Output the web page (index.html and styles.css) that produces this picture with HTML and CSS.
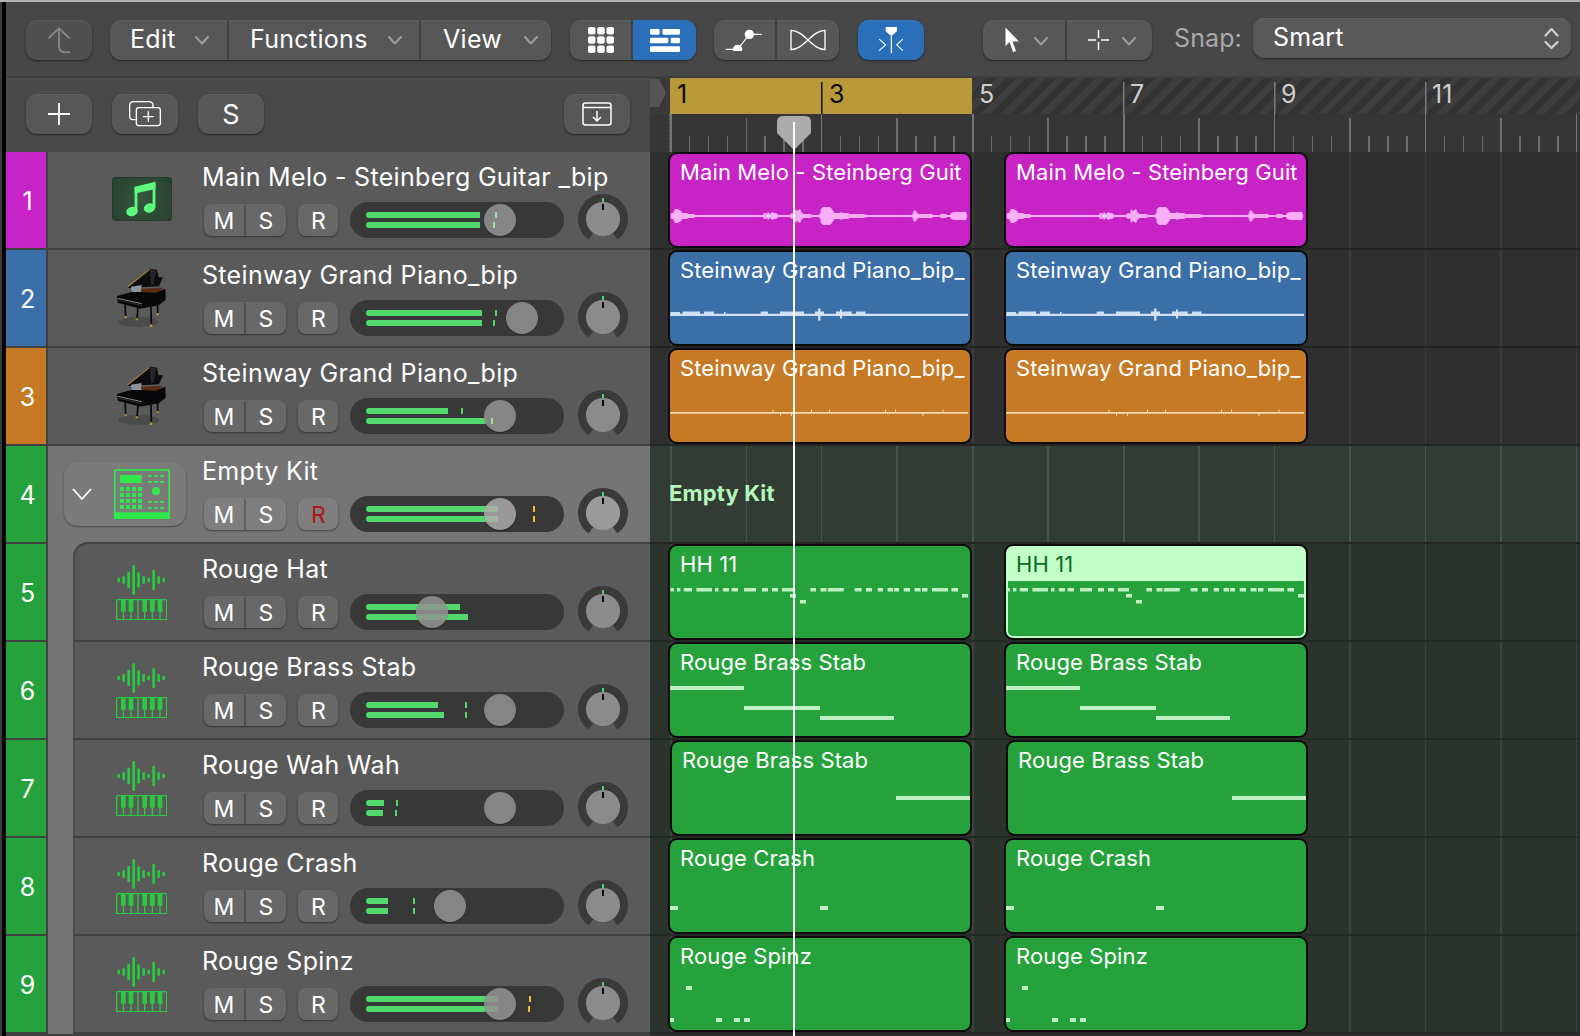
FILE: index.html
```html
<!DOCTYPE html>
<html lang="en">
<head>
<meta charset="utf-8">
<title>Logic Pro Tracks</title>
<link rel="stylesheet" href="styles.css">
</head>
<body>
<svg class="defs" aria-hidden="true">
  <defs>
    <path id="chev" d="M1 1l6 6.5L13 1" fill="none" stroke="currentColor" stroke-width="2.2" stroke-linecap="round" stroke-linejoin="round"/>
    <g id="ic-note">
      <path d="M24 34V11L42 6.500V31" fill="none" stroke="#5cfb7e" stroke-width="2.800"/>
      <path d="M22.600 10L43.400 5.500V12L22.600 16.500z" fill="#5cfb7e"/>
      <ellipse cx="20" cy="34.500" rx="5.800" ry="4.600" fill="#5cfb7e" transform="rotate(-15 20 34.500)"/>
      <ellipse cx="37.500" cy="31" rx="5.800" ry="4.600" fill="#5cfb7e" transform="rotate(-15 37.500 31)"/>
    </g>
    <g id="ic-piano">
      <ellipse cx="115" cy="452" rx="62" ry="15" fill="#000" opacity=".16"/>
      <path d="M78 350L148 292L170 295L175 318L188 318L176 345L122 348z" fill="#0c0c0e"/>
      <path d="M80 348L148 294" stroke="#b98a3c" stroke-width="3.500"/>
      <path d="M148 294L168 296L160 340L153 340z" fill="#26262a"/>
      <path d="M92 346L124 341L122 362L95 364z" fill="#8e939e"/>
      <path d="M122 352L190 349L168 366L125 364z" fill="#5b2b14"/>
      <path d="M50 374L94 362L122 362L165 364L195 352L196 385L176 402L120 412L52 394z" fill="#08080a"/>
      <path d="M52 381L124 397" stroke="#c9c9c9" stroke-width="2"/>
      <path d="M52 386L124 402" stroke="#444" stroke-width="2"/>
      <path d="M74 392L76 436M152 406L153 462M113 405L110 444M172 396L172 427" stroke="#09090b" stroke-width="5"/>
      <path d="M73 434h6v7h-6zM149 459h7v8h-7zM106 441h7v6h-7zM169 425h6v7h-6z" fill="#b6913f"/>
    </g>
    <g id="ic-kit">
      <rect x="164.500" y="62.500" width="163" height="145" rx="3" fill="none" stroke="currentColor" stroke-width="5"/>
      <rect x="162" y="190" width="168" height="20" rx="2" fill="currentColor"/>
      <rect x="180" y="78" width="65" height="24" fill="currentColor"/>
      <path fill="currentColor" d="M180 114h12v12h-12zM198 114h12v12h-12zM216 114h12v12h-12zM234 114h12v12h-12zM180 132h12v12h-12zM198 132h12v12h-12zM216 132h12v12h-12zM234 132h12v12h-12zM180 150h12v12h-12zM198 150h12v12h-12zM216 150h12v12h-12zM234 150h12v12h-12zM180 168h12v12h-12zM198 168h12v12h-12zM216 168h12v12h-12zM234 168h12v12h-12z"/>
      <path fill="currentColor" d="M264 78h12v5h-12zM282 78h12v5h-12zM300 78h12v5h-12zM264 96h12v5h-12zM282 96h12v5h-12zM300 96h12v5h-12zM264 156h12v5h-12zM282 156h12v5h-12zM300 156h12v5h-12zM264 174h12v5h-12zM282 174h12v5h-12zM300 174h12v5h-12z"/>
      <circle cx="288" cy="126" r="12" fill="currentColor"/>
    </g>
    <g id="ic-wave" stroke="currentColor" stroke-width="8" stroke-linecap="round">
      <path d="M178 387v6M193 382v16M208 369v42M223 349v82M238 371v38M253 382v16M268 387v6M283 364v52M298 382v16M313 387v6"/>
    </g>
    <g id="ic-keys" fill="currentColor">
      <rect x="170" y="452" width="150" height="60" rx="3" fill="none" stroke="currentColor" stroke-width="4"/>
      <path d="M183 452h14v36h-14zM206 452h14v36h-14zM247 452h14v36h-14zM270 452h14v36h-14zM293 452h14v36h-14z"/>
      <path d="M188 488h4v24h-4zM211 488h4v24h-4zM232 452h4v60h-4zM252 488h4v24h-4zM275 488h4v24h-4zM298 488h4v24h-4z"/>
    </g>
    <g id="ic-pan">
      <path d="M12.950 42.200A21 21 0 1 1 37.050 42.200" fill="none" stroke="#3a3a3a" stroke-width="8"/>
      <rect x="24" y="4" width="2" height="4" fill="#4fd46a"/>
      <circle cx="25" cy="25" r="17" fill="currentColor"/>
      <rect x="24" y="10" width="2" height="6" fill="#0c0c0c"/>
    </g>
    <path id="melo-half" d="M0.700 0V1L1 3H3L4 5L5 7H8L9 6L11 5L12 3H17L18 2H24L25 1H93L94 3H96L97 2L98 4L100 2L102 4L104 3H106L107 2L108 1H120L122 3L124 2L125 7L127 5L130 7L132 3L134 2H140L143 1H148L150 2L151 7L153 9H160L162 7L163 5L165 3H170L171 4L173 3H178L180 2H193L197 1H242L243 3L244 6L246 5L248 2H262L263 1H270L271 2H276L277 1H280L281 3L284 4H296L297 1V0z"/>
    <g id="melo-wave" fill="#f8aef7">
      <use href="#melo-half"/>
      <use href="#melo-half" transform="scale(1 -1)"/>
    </g>
    <g id="blue-wave" fill="#cfe0f5">
      <path d="M0 63.700h298v2.200h-298zM0.400 62h9.600v3h-9.600zM12.500 61.500h17.500v3h-17.500zM34 61.500h10v3h-10zM54 62h1.500v2h-1.500zM90.600 61.500h7.400v3h-7.400zM110 61.500h24v3h-24zM148 58.500h2.500v12h-2.500zM145 61.500h9v3h-9zM166 61.500h15.600v3h-15.600zM170 59.500h2v9h-2zM186 61.500h9.500v3h-9.500z"/>
    </g>
    <g id="orange-wave" fill="#f8d9ae">
      <path d="M0 64h298v1.800h-298zM102.500 61.500h1v3h-1zM110 65h1v3h-1zM121 65h1v3h-1zM141 61.500h1v3h-1zM159 61.500h1v3h-1zM215 61.500h1v3h-1zM225 61.500h1v3h-1zM252.500 65h1v3h-1zM272.500 61.500h1v3h-1z"/>
    </g>
    <path id="hh" d="M0.400 44h3.500v3.500h-3.500zM6.900 44h3.500v3.500h-3.500zM13.800 44h8.200v3.500h-8.200zM26.400 44h15.600v3.500h-15.600zM45 44h3.500v3.500h-3.500zM52.900 44h6.100v3.500h-6.100zM61.500 44h6.500v3.500h-6.500zM74 44h12v3.500h-12zM92 44h6v3.500h-6zM102 44h6v3.500h-6zM112 44h11v3.500h-11zM140.400 44h5.600v3.500h-5.600zM150.400 44h6.100v3.500h-6.100zM157.800 44h16v3.500h-16zM184.700 44h6.900v3.500h-6.900zM196 44h6v3.500h-6zM207.700 44h5.300v3.500h-5.300zM217.600 44h5.400v3.500h-5.400zM224 44h5v3.500h-5zM233.700 44h6.300v3.500h-6.300zM244.500 44h6v3.500h-6zM252 44h5.500v3.500h-5.500zM262 44h16v3.500h-16zM281.400 44h6.600v3.500h-6.600zM120 50h6v3.500h-6zM130 56h6v3.500h-6zM292 50h6v3.500h-6z"/>
    <path id="brass" d="M0 44h74v4h-74zM74 64h76v4h-76zM150 74h74v4h-74z"/>
    <path id="brass2" d="M224 56h76v4h-76z"/>
    <path id="crash" d="M0 68h8v4h-8zM150 68h8v4h-8z"/>
    <path id="spinz" d="M16 50h6v4h-6zM0 82h4v4h-4zM46 82h6v4h-6zM64 82h6v4h-6zM74 82h6v4h-6z"/>
  </defs>
</svg>

<div class="app">
  <div class="edge"></div>
  <div class="content">
    <header class="toolbar">
      <button class="btn dim w-back"><svg width="22" height="26" viewBox="146 80 60 72"><path d="M148 110L176 84L204 110M176 84V132Q176 150 192 150H206" fill="none" stroke="#8c8c8c" stroke-width="4.500" stroke-linecap="round" stroke-linejoin="round"/></svg></button>
      <div class="btn group menus">
        <div class="seg m-edit">Edit<svg class="chev" width="14" height="9"><use href="#chev"/></svg></div>
        <div class="seg m-func">Functions<svg class="chev" width="14" height="9"><use href="#chev"/></svg></div>
        <div class="seg m-view">View<svg class="chev" width="14" height="9"><use href="#chev"/></svg></div>
      </div>
      <div class="btn group g-view">
        <div class="seg icon w-63">
          <svg width="26" height="26" viewBox="0 0 26 26" fill="#fff"><rect x="0" y="0" width="7.500" height="7.500" rx="2"/><rect x="9.250" y="0" width="7.500" height="7.500" rx="2"/><rect x="18.500" y="0" width="7.500" height="7.500" rx="2"/><rect x="0" y="9.250" width="7.500" height="7.500" rx="2"/><rect x="9.250" y="9.250" width="7.500" height="7.500" rx="2"/><rect x="18.500" y="9.250" width="7.500" height="7.500" rx="2"/><rect x="0" y="18.500" width="7.500" height="7.500" rx="2"/><rect x="9.250" y="18.500" width="7.500" height="7.500" rx="2"/><rect x="18.500" y="18.500" width="7.500" height="7.500" rx="2"/></svg>
        </div>
        <div class="seg icon blue">
          <svg width="30" height="23" viewBox="267 90 87 66" fill="#fff"><rect x="267" y="90" width="28" height="16" rx="4"/><rect x="303" y="90" width="51" height="16" rx="3"/><rect x="267" y="115" width="53" height="16" rx="3"/><rect x="327" y="115" width="27" height="16" rx="4"/><rect x="267" y="140" width="87" height="16" rx="3"/></svg>
        </div>
      </div>
      <div class="btn group g-curves">
        <div class="seg icon w-63">
          <svg class="curve" width="37" height="22" viewBox="495 84 111 66" fill="none" stroke="#fff" stroke-width="3.500"><path d="M497 145H520M580 100H605M533 145L568 100"/><circle cx="533" cy="145" r="14" fill="#fff" stroke="none"/><circle cx="568" cy="100" r="14" fill="#fff" stroke="none"/></svg>
        </div>
        <div class="seg icon">
          <svg width="36" height="22" viewBox="692 86 108 66" fill="none" stroke="#fff" stroke-width="4" stroke-linecap="round" stroke-linejoin="round"><path d="M695 148V90C735 90 757 148 797 148V90C757 90 735 148 695 148"/></svg>
        </div>
      </div>
      <button class="btn blue w-snap"><svg width="26" height="27" viewBox="956 82 74 80" fill="none" stroke="#fff" stroke-width="3.500" stroke-linejoin="round"><path d="M979 84H1009L1009 93L998 104H990L979 93z" fill="#fff"/><path d="M994 104V160M958 118L977 135L958 152M1028 118L1010 135L1028 152"/></svg></button>
      <div class="btn group g-tools">
        <div class="seg icon t-arrow">
          <svg width="15" height="26" viewBox="0 0 15 26"><path d="M0.500 0.500V19L4.500 15L8 25L11 24L7.500 14.500H14z" fill="#fff"/></svg>
          <svg class="chev" width="14" height="9"><use href="#chev"/></svg>
        </div>
        <div class="seg icon t-cross">
          <svg width="21" height="20" viewBox="0 0 21 20" stroke="#fff" stroke-width="1.500"><path d="M10.500 0V8M10.500 12V20M0 10H8M13 10H21"/></svg>
          <svg class="chev" width="14" height="9"><use href="#chev"/></svg>
        </div>
      </div>
      <span class="snap-label">Snap:</span>
      <div class="btn select">
        <span>Smart</span>
        <svg class="updown" width="15" height="21" viewBox="0 0 15 21" fill="none" stroke-width="2.200" stroke-linecap="round" stroke-linejoin="round"><path d="M1.500 7.500L7.500 1L13.500 7.500M1.500 14L7.500 20L13.500 14"/></svg>
      </div>
    </header>

    <div class="main">
      <section class="tracks">
        <div class="track-head">
          <button class="btn w-add"><svg width="22" height="22" viewBox="0 0 22 22" stroke="#fff" stroke-width="1.800"><path d="M11 0V22M0 11H22"/></svg></button>
          <button class="btn w-add"><svg width="32" height="26" viewBox="390 304 96 78" fill="none" stroke="#fff" stroke-width="4"><path d="M410 360H402Q392 360 392 350V318Q392 306 404 306H450Q462 306 462 318V324"/><rect x="412" y="324" width="72" height="54" rx="7"/><path d="M448 335V367M432 351H464"/></svg></button>
          <button class="btn w-add s-text">S</button>
          <button class="btn w-add end"><svg width="30" height="24" viewBox="0 0 30 24" fill="none" stroke="#fff" stroke-width="1.500"><rect x="1" y="1" width="28" height="22" rx="2.500"/><path d="M1 5.500H29M15 9V19M11 15L15 19L19 15"/></svg></button>
        </div>

        <div class="track">
          <div class="strip c-mag">1</div>
          <div class="tbody">
            <div class="icon-col"><div class="note-box"><svg width="60" height="44" viewBox="0 0 60 44"><use href="#ic-note"/></svg></div></div>
            <div class="info">
              <div class="name">Main Melo - Steinberg Guitar _bip</div>
              <div class="ctrls">
                <div class="ms"><span>M</span><span>S</span></div><div class="rec">R</div>
                <div class="fader"><i class="bar b1" style="width:114px"></i><i class="bar b2" style="width:114px"></i><i class="knob" style="left:134px"></i><i class="pk p1 lite" style="left:145px"></i><i class="pk p2 lite" style="left:143px"></i></div>
                <svg class="pan" width="50" height="50"><use href="#ic-pan"/></svg>
              </div>
            </div>
          </div>
        </div>

        <div class="track">
          <div class="strip c-blue">2</div>
          <div class="tbody">
            <div class="icon-col"><svg width="50" height="60" viewBox="47 290 150 180"><use href="#ic-piano"/></svg></div>
            <div class="info">
              <div class="name">Steinway Grand Piano_bip</div>
              <div class="ctrls">
                <div class="ms"><span>M</span><span>S</span></div><div class="rec">R</div>
                <div class="fader"><i class="bar b1" style="width:116px"></i><i class="bar b2" style="width:116px"></i><i class="knob" style="left:156px"></i><i class="pk p1" style="left:145px"></i><i class="pk p2" style="left:143px"></i></div>
                <svg class="pan" width="50" height="50"><use href="#ic-pan"/></svg>
              </div>
            </div>
          </div>
        </div>

        <div class="track">
          <div class="strip c-orange">3</div>
          <div class="tbody">
            <div class="icon-col"><svg width="50" height="60" viewBox="47 290 150 180"><use href="#ic-piano"/></svg></div>
            <div class="info">
              <div class="name">Steinway Grand Piano_bip</div>
              <div class="ctrls">
                <div class="ms"><span>M</span><span>S</span></div><div class="rec">R</div>
                <div class="fader"><i class="bar b1" style="width:82px"></i><i class="bar b2" style="width:120px"></i><i class="knob" style="left:134px"></i><i class="pk p1" style="left:111px"></i><i class="pk p2 lite" style="left:141px"></i></div>
                <svg class="pan" width="50" height="50"><use href="#ic-pan"/></svg>
              </div>
            </div>
          </div>
        </div>

        <div class="track group-head">
          <div class="strip c-green">4</div>
          <div class="tbody">
            <div class="icon-col kit-col">
              <div class="kit-box">
                <svg class="kit-chev" width="20" height="12" viewBox="0 0 20 12" fill="none" stroke="#fff" stroke-width="1.700"><path d="M1 1L10 11L19 1"/></svg>
                <svg class="kit-ic" width="56" height="50" viewBox="162 60 168 150"><use href="#ic-kit"/></svg>
              </div>
            </div>
            <div class="info">
              <div class="name">Empty Kit</div>
              <div class="ctrls">
                <div class="ms"><span>M</span><span>S</span></div><div class="rec armed">R</div>
                <div class="fader"><i class="bar b1" style="width:132px"></i><i class="bar b2" style="width:132px"></i><i class="knob" style="left:134px"></i><i class="pk p1 warn" style="left:183px"></i><i class="pk p2 warn" style="left:183px"></i></div>
                <svg class="pan" width="50" height="50"><use href="#ic-pan"/></svg>
              </div>
            </div>
          </div>
        </div>

        <div class="track sub first">
          <div class="strip c-green">5</div>
          <div class="gutter"></div>
          <div class="tbody">
            <div class="icon-col stack"><svg width="50" height="30" viewBox="170 345 150 90"><use href="#ic-wave"/></svg><svg width="51" height="21" viewBox="168 450 153 63"><use href="#ic-keys"/></svg></div>
            <div class="info">
              <div class="name">Rouge Hat</div>
              <div class="ctrls">
                <div class="ms"><span>M</span><span>S</span></div><div class="rec">R</div>
                <div class="fader"><i class="bar b1" style="width:94px"></i><i class="bar b2" style="width:102px"></i><i class="knob" style="left:66px"></i></div>
                <svg class="pan" width="50" height="50"><use href="#ic-pan"/></svg>
              </div>
            </div>
          </div>
        </div>

        <div class="track sub">
          <div class="strip c-green">6</div>
          <div class="gutter"></div>
          <div class="tbody">
            <div class="icon-col stack"><svg width="50" height="30" viewBox="170 345 150 90"><use href="#ic-wave"/></svg><svg width="51" height="21" viewBox="168 450 153 63"><use href="#ic-keys"/></svg></div>
            <div class="info">
              <div class="name">Rouge Brass Stab</div>
              <div class="ctrls">
                <div class="ms"><span>M</span><span>S</span></div><div class="rec">R</div>
                <div class="fader"><i class="bar b1" style="width:72px"></i><i class="bar b2" style="width:78px"></i><i class="knob" style="left:134px"></i><i class="pk p1" style="left:115px"></i><i class="pk p2" style="left:115px"></i></div>
                <svg class="pan" width="50" height="50"><use href="#ic-pan"/></svg>
              </div>
            </div>
          </div>
        </div>

        <div class="track sub">
          <div class="strip c-green">7</div>
          <div class="gutter"></div>
          <div class="tbody">
            <div class="icon-col stack"><svg width="50" height="30" viewBox="170 345 150 90"><use href="#ic-wave"/></svg><svg width="51" height="21" viewBox="168 450 153 63"><use href="#ic-keys"/></svg></div>
            <div class="info">
              <div class="name">Rouge Wah Wah</div>
              <div class="ctrls">
                <div class="ms"><span>M</span><span>S</span></div><div class="rec">R</div>
                <div class="fader"><i class="bar b1" style="width:18px"></i><i class="bar b2" style="width:17px"></i><i class="knob" style="left:134px"></i><i class="pk p1" style="left:46px"></i><i class="pk p2" style="left:45px"></i></div>
                <svg class="pan" width="50" height="50"><use href="#ic-pan"/></svg>
              </div>
            </div>
          </div>
        </div>

        <div class="track sub">
          <div class="strip c-green">8</div>
          <div class="gutter"></div>
          <div class="tbody">
            <div class="icon-col stack"><svg width="50" height="30" viewBox="170 345 150 90"><use href="#ic-wave"/></svg><svg width="51" height="21" viewBox="168 450 153 63"><use href="#ic-keys"/></svg></div>
            <div class="info">
              <div class="name">Rouge Crash</div>
              <div class="ctrls">
                <div class="ms"><span>M</span><span>S</span></div><div class="rec">R</div>
                <div class="fader"><i class="bar b1" style="width:22px"></i><i class="bar b2" style="width:22px"></i><i class="knob" style="left:84px"></i><i class="pk p1" style="left:63px"></i><i class="pk p2" style="left:63px"></i></div>
                <svg class="pan" width="50" height="50"><use href="#ic-pan"/></svg>
              </div>
            </div>
          </div>
        </div>

        <div class="track sub">
          <div class="strip c-green">9</div>
          <div class="gutter"></div>
          <div class="tbody">
            <div class="icon-col stack"><svg width="50" height="30" viewBox="170 345 150 90"><use href="#ic-wave"/></svg><svg width="51" height="21" viewBox="168 450 153 63"><use href="#ic-keys"/></svg></div>
            <div class="info">
              <div class="name">Rouge Spinz</div>
              <div class="ctrls">
                <div class="ms"><span>M</span><span>S</span></div><div class="rec">R</div>
                <div class="fader"><i class="bar b1" style="width:132px"></i><i class="bar b2" style="width:132px"></i><i class="knob" style="left:134px"></i><i class="pk p1 warn" style="left:179px"></i><i class="pk p2 warn" style="left:178px"></i></div>
                <svg class="pan" width="50" height="50"><use href="#ic-pan"/></svg>
              </div>
            </div>
          </div>
        </div>
      </section>

      <section class="arrange">
        <div class="ruler-top">
          <div class="bars">
            <div class="cell gold">1</div>
            <div class="cell gold">3</div>
            <div class="cell">5</div>
            <div class="cell">7</div>
            <div class="cell">9</div>
            <div class="cell">11</div>
          </div>
        </div>
        <div class="ruler-ticks"><div class="ticks"></div></div>

        <div class="lane">
          <div class="region r-mag"><span>Main Melo - Steinberg Guit</span><svg class="ev"><use href="#melo-wave" y="64"/></svg></div>
          <div class="region r-mag"><span>Main Melo - Steinberg Guit</span><svg class="ev"><use href="#melo-wave" y="64"/></svg></div>
        </div>
        <div class="lane">
          <div class="region r-blue"><span>Steinway Grand Piano_bip_</span><svg class="ev"><use href="#blue-wave"/></svg></div>
          <div class="region r-blue"><span>Steinway Grand Piano_bip_</span><svg class="ev"><use href="#blue-wave"/></svg></div>
        </div>
        <div class="lane">
          <div class="region r-orange"><span>Steinway Grand Piano_bip_</span><svg class="ev"><use href="#orange-wave"/></svg></div>
          <div class="region r-orange"><span>Steinway Grand Piano_bip_</span><svg class="ev"><use href="#orange-wave"/></svg></div>
        </div>
        <div class="lane kit-lane"><div class="kit-label">Empty Kit</div></div>
        <div class="lane g-lane">
          <div class="region r-green"><span>HH 11</span><svg class="ev notes"><use href="#hh"/></svg></div>
          <div class="region r-green selected"><span>HH 11</span><svg class="ev notes"><use href="#hh"/></svg></div>
        </div>
        <div class="lane g-lane">
          <div class="region r-green"><span>Rouge Brass Stab</span><svg class="ev notes"><use href="#brass"/></svg></div>
          <div class="region r-green"><span>Rouge Brass Stab</span><svg class="ev notes"><use href="#brass"/></svg></div>
        </div>
        <div class="lane g-lane inset">
          <div class="region r-green"><span>Rouge Brass Stab</span><svg class="ev notes"><use href="#brass2"/></svg></div>
          <div class="region r-green"><span>Rouge Brass Stab</span><svg class="ev notes"><use href="#brass2"/></svg></div>
        </div>
        <div class="lane g-lane">
          <div class="region r-green"><span>Rouge Crash</span><svg class="ev notes"><use href="#crash"/></svg></div>
          <div class="region r-green"><span>Rouge Crash</span><svg class="ev notes"><use href="#crash"/></svg></div>
        </div>
        <div class="lane g-lane">
          <div class="region r-green"><span>Rouge Spinz</span><svg class="ev notes"><use href="#spinz"/></svg></div>
          <div class="region r-green"><span>Rouge Spinz</span><svg class="ev notes"><use href="#spinz"/></svg></div>
        </div>

        <svg class="play-head" width="34" height="34" viewBox="0 0 34 34"><path d="M6 0H28Q34 0 34 6V17L17 34L0 17V6Q0 0 6 0z" fill="#acacac"/></svg>
        <div class="play-line"></div>
      </section>
    </div>
  </div>
</div>
</body>
</html>
```

FILE: styles.css
```css
* { box-sizing: border-box; }
html, body { margin: 0; padding: 0; }
body {
  width: 1580px;
  height: 1036px;
  overflow: hidden;
  background: #2c2c2c;
  font-family: Inter, "Noto Sans", "Liberation Sans", sans-serif;
  color: #fff;
}
.defs { position: absolute; width: 0; height: 0; }
svg { display: block; flex: none; }
button { font: inherit; color: inherit; border: 0; padding: 0; }

.app {
  display: flex;
  height: 1036px;
  border-top: 2px solid #b4b4b4;
}
.edge { width: 6px; flex: none; background: #000; border-left: 2px solid #3a3a3a; }
.content { flex: 1; min-width: 0; display: flex; flex-direction: column; }

/* toolbar */
.toolbar {
  height: 76px;
  flex: none;
  display: flex;
  align-items: flex-start;
  padding: 18px 0 0 20px;
  background: #474747;
  border-bottom: 2px solid #3e3e3e;
  font-size: 25px;
}
.btn {
  height: 40px;
  border-radius: 11px;
  background: #575757;
  box-shadow: 0 1px 2px rgba(0, 0, 0, .5), inset 0 1px 0 rgba(255, 255, 255, .05);
  display: flex;
  align-items: center;
  justify-content: center;
  flex: none;
}
.btn.dim { background: #505050; }
.btn.blue { background: #2a6fb9; }
.w-back { width: 66px; }
.group { overflow: hidden; justify-content: flex-start; }
.seg {
  height: 100%;
  padding-bottom: 2px;
  display: flex;
  align-items: center;
  justify-content: space-between;
  border-right: 2px solid #414141;
  letter-spacing: 0.3px;
}
.seg:last-child { border-right: 0; }
.chev { color: #9b9b9b; margin-top: 2px; }
.menus { width: 441px; margin-left: 18px; }
.m-edit { width: 119px; padding: 0 18px 2px 20px; }
.m-func { width: 192px; padding: 0 17px 2px 21px; }
.m-view { width: 130px; padding: 0 13px 2px 22px; }
.g-view { width: 126px; margin-left: 19px; }
.g-curves { width: 125px; margin-left: 18px; }
.icon { flex: 1; justify-content: center; padding-bottom: 0; }
.w-63 { flex: none; width: 63px; }
.g-view .blue { background: #2a6fb9; }
.curve { margin-left: -3px; }
.w-snap { width: 66px; margin-left: 19px; }
.g-tools { width: 169px; margin-left: 59px; }
.t-arrow { flex: none; width: 84px; justify-content: flex-start; padding-left: 22px; gap: 14px; }
.t-cross { justify-content: flex-start; padding-left: 21px; gap: 13px; }
.snap-label { margin: 3px 0 0 22px; color: #a9a9a9; width: 79px; flex: none; letter-spacing: 0.1px; }
.select {
  width: 318px;
  margin-top: -2px;
  justify-content: space-between;
  padding: 0 12px 2px 20px;
  background: #595959;
  letter-spacing: 0.1px;
}
.updown { stroke: #d0d0d0; margin-top: 2px; }

/* main */
.main { flex: 1; min-height: 0; display: flex; }
.tracks { width: 644px; flex: none; background: #414141; display: flex; flex-direction: column; }
.track-head {
  height: 74px;
  flex: none;
  display: flex;
  gap: 20px;
  padding: 16px 0 0 20px;
  background: #494949;
}
.w-add { width: 66px; }
.s-text { font-size: 27px; }
.end { margin-left: auto; margin-right: 20px; }

.track { height: 98px; flex: none; display: flex; }
.strip {
  width: 40px;
  height: 96px;
  flex: none;
  margin-right: 2px;
  padding: 2px 0 0 3px;
  display: flex;
  align-items: center;
  justify-content: center;
  font-size: 25px;
}
.c-mag { background: #c624c6; }
.c-blue { background: #3a6fa9; }
.c-orange { background: #c67a25; }
.c-green { background: #25a23c; }
.tbody {
  flex: 1;
  min-width: 0;
  height: 96px;
  display: flex;
  background: #5a5a5a;
}
.icon-col {
  width: 154px;
  flex: none;
  padding-left: 32px;
  display: flex;
  align-items: center;
  justify-content: center;
}
.note-box {
  width: 60px;
  height: 44px;
  margin: -3px 0 0 1px;
  background: radial-gradient(circle at 50% 50%, #36573f, #28412f);
  border: 1px solid #243a2a;
  border-radius: 3px;
  display: flex;
  align-items: center;
  justify-content: center;
}
.note-box svg { margin: -1px; }
.info { flex: 1; min-width: 0; }
.name {
  height: 30px;
  margin-top: 10px;
  line-height: 30px;
  font-size: 25px;
  white-space: nowrap;
  letter-spacing: 0.32px;
}
.ctrls { height: 36px; margin-top: 10px; padding-left: 2px; display: flex; align-items: center; }
.ms {
  width: 82px;
  height: 32px;
  display: flex;
  border-radius: 8px;
  overflow: hidden;
  background: #686868;
  box-shadow: 0 1px 2px rgba(0, 0, 0, .45);
  font-size: 23px;
  padding-top: 1px;
  flex: none;
}
.ms span { flex: 1; display: flex; align-items: center; justify-content: center; }
.ms span:first-child { border-right: 2px solid #4f4f4f; }
.rec {
  width: 40px;
  height: 32px;
  margin-left: 12px;
  padding: 1px 0 0 1px;
  border-radius: 8px;
  background: #686868;
  box-shadow: 0 1px 2px rgba(0, 0, 0, .45);
  display: flex;
  align-items: center;
  justify-content: center;
  font-size: 23px;
  flex: none;
}
.fader {
  position: relative;
  width: 214px;
  height: 36px;
  margin-left: 12px;
  border-radius: 18px;
  background: #383838;
  flex: none;
}
.bar { position: absolute; left: 16px; height: 6px; background: #52d96b; border-radius: 3px 0 0 3px; }
.b1 { top: 10px; }
.b2 { top: 20px; }
.knob {
  position: absolute;
  top: 2px;
  width: 32px;
  height: 32px;
  border-radius: 50%;
  background: rgba(146, 146, 146, .86);
  box-shadow: 0 1px 1px rgba(0, 0, 0, .3);
}
.pk { position: absolute; width: 2px; height: 6px; background: #52d96b; }
.pk.lite { background: #9be6a5; }
.pk.warn { background: #f6bb2a; }
.p1 { top: 10px; }
.p2 { top: 20px; }
.pan { margin: -8px 0 0 14px; color: #8b8b8b; align-self: flex-start; }

/* group */
.group-head .tbody { background: #757575; height: 98px; }
.group-head .ms, .group-head .rec { background: #7e7e7e; }
.group-head .ms span:first-child { border-right-color: #5f5f5f; }
.group-head .pan { color: #9a9a9a; }
.group-head .knob { background: rgba(175, 175, 175, .82); }
.kit-col { padding: 0 0 2px 16px; justify-content: flex-start; }
.kit-box {
  width: 122px;
  height: 64px;
  border-radius: 14px;
  background: #7b7b7b;
  box-shadow: 0 1px 2px rgba(0, 0, 0, .4);
  display: flex;
  align-items: center;
  padding-left: 8px;
  gap: 22px;
  color: #2fe84a;
}
.armed { color: #b21616; }
.gutter { width: 25px; flex: none; background: #757575; height: 98px; }
.sub { position: relative; }
.sub .icon-col {
  width: 129px;
  padding: 1px 0 0 7px;
  flex-direction: column;
  gap: 4px;
  color: #28cb40;
}
.sub .tbody { box-shadow: inset 2px 0 0 #4c4c4c; }
.first { background: linear-gradient(90deg, transparent 48px, #757575 48px 100px, transparent 100px) 0 0 / 100% 20px no-repeat; }
.first .tbody {
  height: 98px;
  margin-top: -2px;
  border-top: 2px solid #434343;
  border-top-left-radius: 15px;
  box-shadow: inset 2px 0 0 #4a4a4a;
}

/* arrange */
.arrange {
  position: relative;
  flex: 1;
  min-width: 0;
  display: flex;
  flex-direction: column;
  background: #2d2d2d;
  overflow: hidden;
}
.ruler-top {
  height: 36px;
  flex: none;
  padding-left: 20px;
  background: #3a3a3a;
  position: relative;
}
.ruler-top::before {
  content: "";
  position: absolute;
  left: 0;
  top: 1px;
  width: 16px;
  height: 28px;
  background: #555;
  clip-path: polygon(0 0, 55% 0, 100% 50%, 55% 100%, 0 100%);
}
.bars {
  display: flex;
  height: 36px;
  background: repeating-linear-gradient(135deg, #333 0 7px, #3d3d3d 7px 14px);
}
.cell {
  width: 151px;
  flex: none;
  padding-left: 7px;
  font-size: 25px;
  line-height: 32px;
  color: #cfcfcf;
  background: linear-gradient(#7a7a7a, #7a7a7a) left 4px / 1.5px 32px no-repeat;
}
.cell:nth-child(3) { background: none; }
.cell:nth-child(1) { background: #ba9a38; color: #0a0a0a; }
.cell:nth-child(2) { background: linear-gradient(#0a0a0a, #0a0a0a) left 4px / 1.500px 32px no-repeat, #ba9a38; color: #0a0a0a; padding-left: 8px; }
.ruler-ticks {
  height: 38px;
  flex: none;
  background: #363636;
  padding-left: 19px;
  display: flex;
}
.ticks {
  flex: 1;
  border-left: 1px dotted #777;
  background-image:
    repeating-linear-gradient(90deg, #777 0 1.5px, transparent 1.5px 151px),
    repeating-linear-gradient(90deg, #6c6c6c 0 1.5px, transparent 1.5px 75.5px),
    repeating-linear-gradient(90deg, #6c6c6c 0 1.5px, transparent 1.5px 18.875px);
  background-position: 0 0, 0 4px, 0 22px;
  background-repeat: no-repeat;
}

.lane {
  height: 98px;
  flex: none;
  display: flex;
  gap: 32px;
  padding: 0 0 0 18px;
  border-bottom: 2px solid #242424;
  background-color: #2f2f2f;
  background-image: repeating-linear-gradient(90deg, #3b3b3b 0 1.5px, transparent 1.5px 75.5px);
  background-position: 20px 0;
  background-repeat: no-repeat;
}
.kit-lane {
  background-color: #333c34;
  background-image: repeating-linear-gradient(90deg, #4a534b 0 1.5px, transparent 1.5px 75.5px);
  align-items: center;
  padding: 0 0 2px 19px;
}
.g-lane {
  background-color: #2b332c;
  background-image: repeating-linear-gradient(90deg, #3b443c 0 1.5px, transparent 1.5px 75.5px);
  border-bottom-color: #242a25;
}
.kit-label { font-size: 22px; font-weight: 700; color: #b5f7bb; letter-spacing: 0.15px; }
.region {
  position: relative;
  width: 304px;
  height: 96px;
  flex: none;
  border: 2px solid #0b0b0b;
  border-radius: 9px;
  overflow: hidden;
  padding: 3px 0 0 10px;
  font-size: 22px;
  line-height: 30px;
  white-space: nowrap;
  letter-spacing: 0.12px;
}
.r-mag { background: #c723c5; }
.r-blue { background: #3b6fa8; }
.r-orange { background: #c67a25; }
.r-green { background: #26a23c; }
.ev { position: absolute; left: 0; top: -2px; width: 302px; height: 98px; overflow: hidden; }
.notes { fill: #bff0c5; }
.inset .region { width: 302px; margin-left: 2px; }
.selected {
  background: linear-gradient(#c2ffc8 0 35px, #26a23c 35px);
  color: #0e6a22;
  box-shadow: inset 0 0 0 2px #c2ffc8;
}
.play-line { position: absolute; left: 143px; top: 44px; bottom: 0; width: 2px; background: #fff; }
.play-head { position: absolute; left: 127px; top: 38px; }
```
